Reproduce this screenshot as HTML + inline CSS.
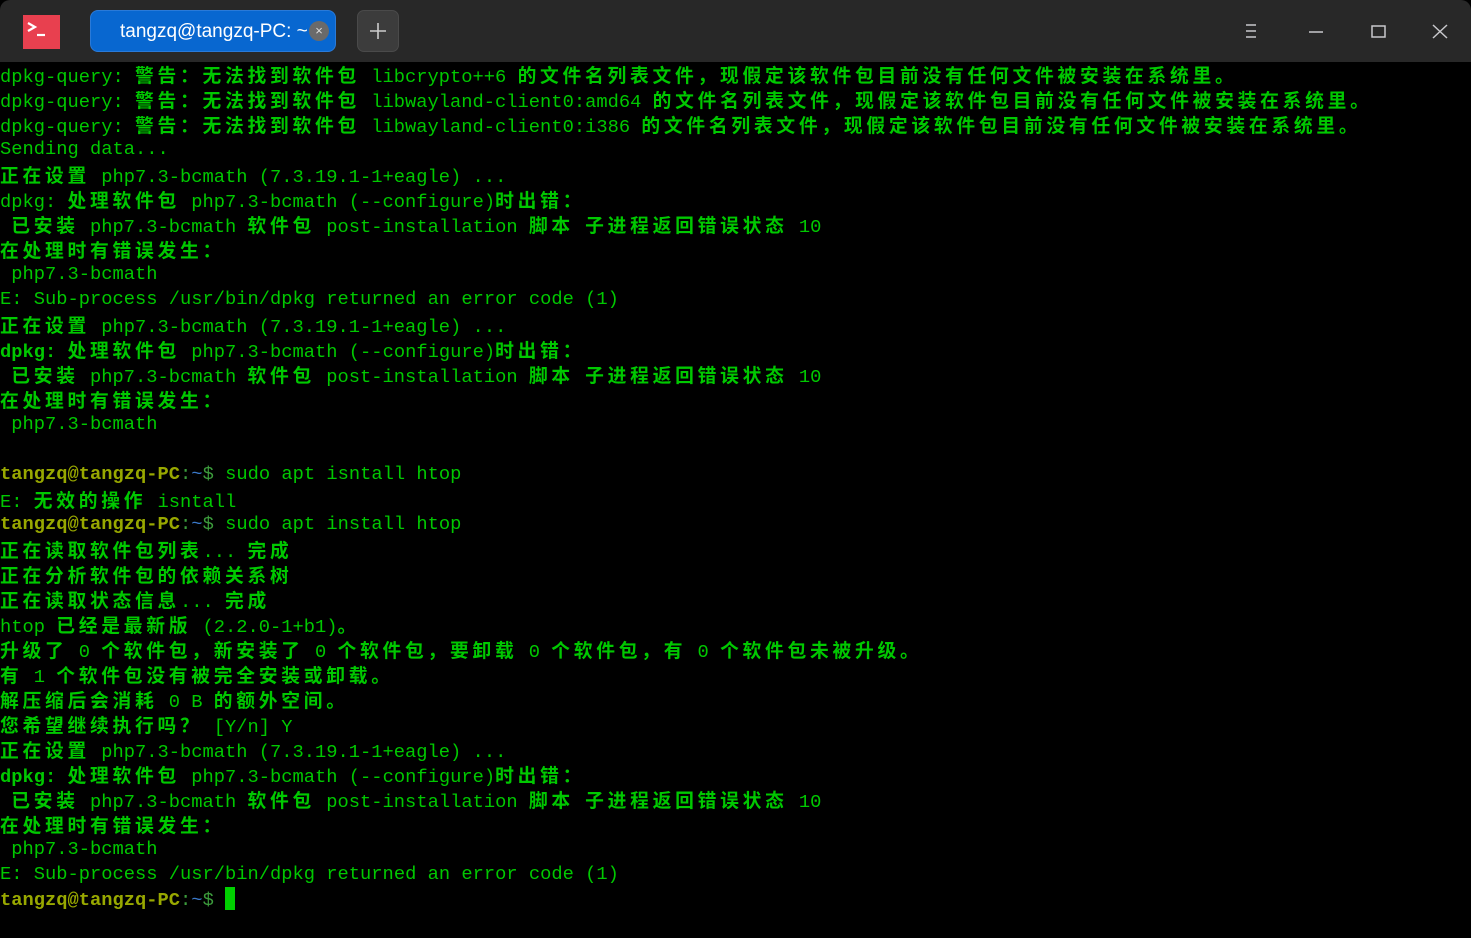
<!DOCTYPE html>
<html><head><meta charset="utf-8"><style>
html,body{margin:0;padding:0;width:1471px;height:938px;background:#000;overflow:hidden}
#bar{position:absolute;left:0;top:0;width:1471px;height:62px;background:#282828;border-radius:10px 10px 0 0}
#t{position:absolute;left:0;top:62px;font-family:"Liberation Mono","Noto Sans CJK SC",monospace;font-size:18.75px;color:#00c800}
#t div{height:25px;line-height:25px;white-space:pre}
c{letter-spacing:3.75px;font-weight:bold;font-family:"Noto Sans CJK SC",sans-serif}
.u{color:#98a800;font-weight:bold}.k{color:#3c9c3c}.w{color:#3a78c8}
.bd{font-weight:bold}
</style></head><body>
<div id="bar">
<div style="position:absolute;left:23px;top:15px;width:37px;height:34px;background:#e8404f"></div>
<svg style="position:absolute;left:23px;top:15px" width="37" height="34"><path d="M5 8 L12 12 L5 16" stroke="#fff" stroke-width="2.2" fill="none"/><path d="M14 20 H22" stroke="#fff" stroke-width="2.2"/></svg>
<div style="position:absolute;left:90px;top:10px;width:246px;height:42px;background:#0867d0;border-radius:8px;border:1px solid #2a7ad8;box-sizing:border-box"></div>
<div style="position:absolute;left:120px;top:21px;font-family:'Liberation Sans',sans-serif;font-size:19px;color:#fff">tangzq@tangzq-PC: ~</div>
<div style="position:absolute;left:309px;top:21px;width:20px;height:20px;border-radius:50%;background:#6a6a6a;color:#ddd;font:13px 'Liberation Sans',sans-serif;text-align:center;line-height:20px">×</div>
<div style="position:absolute;left:357px;top:10px;width:42px;height:42px;background:#3c3c3c;border-radius:7px;box-sizing:border-box;border:1px solid #4a4a4a"></div>
<svg style="position:absolute;left:357px;top:10px" width="42" height="42"><path d="M21 13V29M13 21H29" stroke="#ccc" stroke-width="1.6"/></svg>
<svg style="position:absolute;left:1230px;top:10px" width="230" height="42"><g stroke="#c8c8cc" stroke-width="1.5" fill="none"><path d="M16 15H26M16 21H26M16 27H26"/><path d="M79 22H93"/><rect x="142" y="16" width="13" height="11"/><path d="M203 15L217 28M217 15L203 28"/></g></svg>
</div>
<div id="t"><div>dpkg-query: <c>警告：无法找到软件包</c> libcrypto++6 <c>的文件名列表文件，现假定该软件包目前没有任何文件被安装在系统里。</c></div><div>dpkg-query: <c>警告：无法找到软件包</c> libwayland-client0:amd64 <c>的文件名列表文件，现假定该软件包目前没有任何文件被安装在系统里。</c></div><div>dpkg-query: <c>警告：无法找到软件包</c> libwayland-client0:i386 <c>的文件名列表文件，现假定该软件包目前没有任何文件被安装在系统里。</c></div><div>Sending data...</div><div><c>正在设置</c> php7.3-bcmath (7.3.19.1-1+eagle) ...</div><div>dpkg: <c>处理软件包</c> php7.3-bcmath (--configure)<c>时出错：</c></div><div> <c>已安装</c> php7.3-bcmath <c>软件包</c> post-installation <c>脚本</c> <c>子进程返回错误状态</c> 10</div><div><c>在处理时有错误发生：</c></div><div> php7.3-bcmath</div><div>E: Sub-process /usr/bin/dpkg returned an error code (1)</div><div><c>正在设置</c> php7.3-bcmath (7.3.19.1-1+eagle) ...</div><div><span class="bd">dpkg:</span> <c>处理软件包</c> php7.3-bcmath (--configure)<c>时出错：</c></div><div> <c>已安装</c> php7.3-bcmath <c>软件包</c> post-installation <c>脚本</c> <c>子进程返回错误状态</c> 10</div><div><c>在处理时有错误发生：</c></div><div> php7.3-bcmath</div><div> </div><div><span class="u">tangzq@tangzq-PC</span><span class="k">:</span><span class="w">~</span><span class="k">$</span> sudo apt isntall htop</div><div>E: <c>无效的操作</c> isntall</div><div><span class="u">tangzq@tangzq-PC</span><span class="k">:</span><span class="w">~</span><span class="k">$</span> sudo apt install htop</div><div><c>正在读取软件包列表</c>... <c>完成</c></div><div><c>正在分析软件包的依赖关系树</c></div><div><c>正在读取状态信息</c>... <c>完成</c></div><div>htop <c>已经是最新版</c> (2.2.0-1+b1)<c>。</c></div><div><c>升级了</c> 0 <c>个软件包，新安装了</c> 0 <c>个软件包，要卸载</c> 0 <c>个软件包，有</c> 0 <c>个软件包未被升级。</c></div><div><c>有</c> 1 <c>个软件包没有被完全安装或卸载。</c></div><div><c>解压缩后会消耗</c> 0 B <c>的额外空间。</c></div><div><c>您希望继续执行吗？</c> [Y/n] Y</div><div><c>正在设置</c> php7.3-bcmath (7.3.19.1-1+eagle) ...</div><div><span class="bd">dpkg:</span> <c>处理软件包</c> php7.3-bcmath (--configure)<c>时出错：</c></div><div> <c>已安装</c> php7.3-bcmath <c>软件包</c> post-installation <c>脚本</c> <c>子进程返回错误状态</c> 10</div><div><c>在处理时有错误发生：</c></div><div> php7.3-bcmath</div><div>E: Sub-process /usr/bin/dpkg returned an error code (1)</div><div><span class="u">tangzq@tangzq-PC</span><span class="k">:</span><span class="w">~</span><span class="k">$</span> <span style="display:inline-block;width:10px;height:23px;background:#00d000;vertical-align:-5px"></span></div></div>
</body></html>
